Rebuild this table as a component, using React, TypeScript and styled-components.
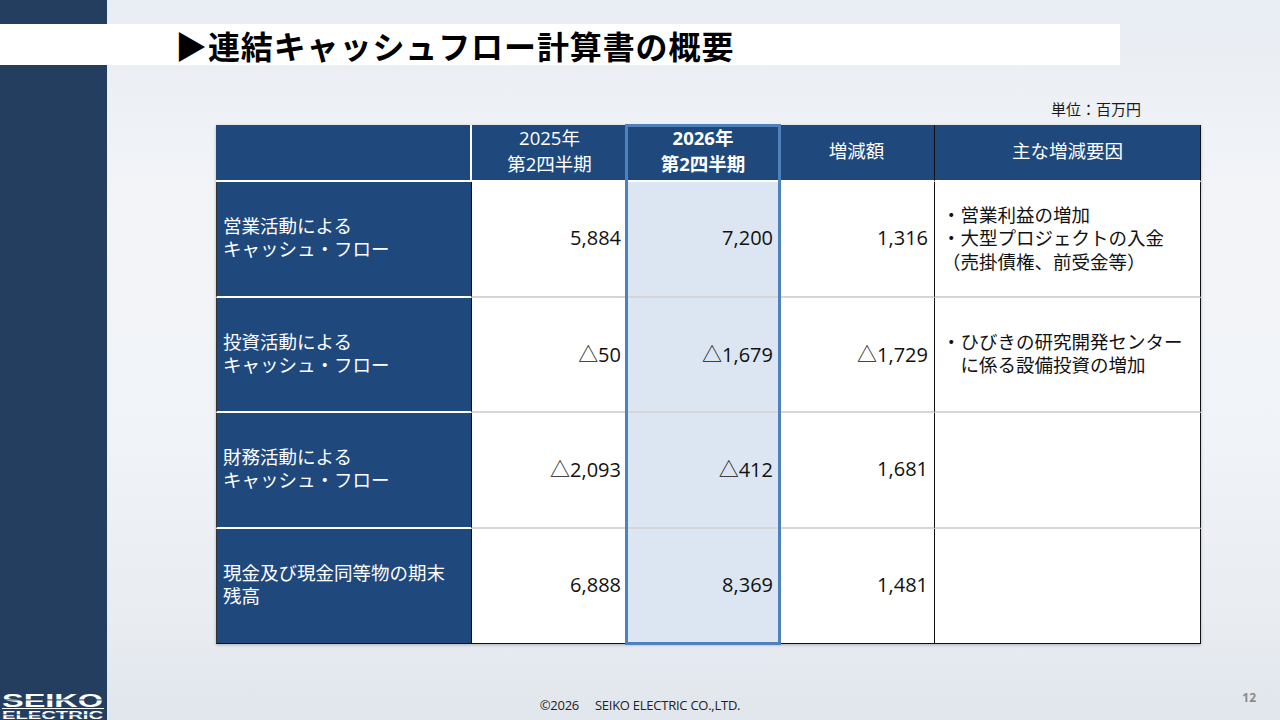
import styled, { createGlobalStyle } from "styled-components";

const GlobalStyle = createGlobalStyle`
  html, body {
    margin: 0;
    padding: 0;
    background: #eef1f5;
  }
  * {
    box-sizing: border-box;
  }
`;

const NAVY = "#1f497d";
const SIDE = "#243e5f";
const HILITE = "#4f81bd";

const Page = styled.div`
  width: 1280px;
  height: 720px;
  overflow: hidden;
  display: flex;
  flex-direction: column;
  font-family: "Open Sans", "Noto Sans CJK JP", sans-serif;
  background:
    linear-gradient(90deg, ${SIDE} 0, ${SIDE} 107px, transparent 107px),
    linear-gradient(180deg, #e8edf3 0%, #f2f4f8 28%, #f0f3f7 60%, #e9edf2 85%, #e1e6ec 100%);
`;

const TitleBand = styled.div`
  margin-top: 24px;
  height: 41px;
  width: 1120px;
  background: #ffffff;
  display: flex;
  align-items: center;
  padding-left: 175px;
`;

const Title = styled.h1`
  margin: 0;
  font-family: "Noto Sans CJK JP", sans-serif;
  font-size: 32px;
  font-weight: 700;
  line-height: 1;
  color: #000;
  letter-spacing: 0.9px;
`;

const Content = styled.div`
  padding-left: 216px;
  display: flex;
  flex-direction: column;
`;

const Unit = styled.div`
  margin-top: 35px;
  width: 985px;
  padding-right: 60px;
  text-align: right;
  font-family: "Noto Sans CJK JP", sans-serif;
  font-size: 15px;
  line-height: 18px;
  color: #1a1a1a;
`;

const Table = styled.div`
  margin-top: 7px;
  display: grid;
  grid-template-columns: 256px 155px 152px 156px 266px;
  grid-template-rows: 57px repeat(4, 115.5px);
  width: 985px;
  box-shadow: 0 1px 3px rgba(0, 0, 0, 0.25);
`;

const HeadCell = styled.div<{ $bold?: boolean; $edge?: "white" | "black" | "none"; $col: number }>`
  grid-row: 1;
  grid-column: ${(p) => p.$col};
  background: ${NAVY};
  color: #fff;
  display: flex;
  flex-direction: column;
  align-items: center;
  justify-content: center;
  text-align: center;
  font-size: 18.5px;
  line-height: 26px;
  font-weight: ${(p) => (p.$bold ? 700 : 400)};
  border-bottom: 2px solid #fff;
  border-right: ${(p) =>
    p.$edge === "white" ? "2px solid #fff" : p.$edge === "black" ? "1.5px solid #111" : "none"};
  padding-bottom: 4px;
`;

const LabelCell = styled.div<{ $row: number; $last?: boolean }>`
  grid-row: ${(p) => p.$row};
  grid-column: 1;
  background: ${NAVY};
  color: #fff;
  display: flex;
  flex-direction: column;
  justify-content: center;
  padding: 0 6px 3px;
  font-family: "Noto Sans CJK JP", sans-serif;
  font-size: 18.5px;
  line-height: 23px;
  border-left: 1px solid #333;
  border-right: 1.5px solid #111;
  border-bottom: ${(p) => (p.$last ? "1.5px solid #111" : "2px solid #fff")};
`;

const ValueCell = styled.div<{ $row: number; $col: number; $hilite?: boolean; $last?: boolean; $edge?: boolean }>`
  grid-row: ${(p) => p.$row};
  grid-column: ${(p) => p.$col};
  background: ${(p) => (p.$hilite ? "#dce6f2" : "#ffffff")};
  color: #111;
  display: flex;
  align-items: center;
  justify-content: flex-end;
  padding: 0 6px 2px;
  font-size: 20px;
  border-bottom: ${(p) => (p.$last ? "1.5px solid #111" : "2px solid #d6d6d6")};
  border-right: ${(p) => (p.$edge ? "1.5px solid #111" : "none")};
`;

const NoteCell = styled.div<{ $row: number; $last?: boolean }>`
  grid-row: ${(p) => p.$row};
  grid-column: 5;
  background: #fff;
  color: #111;
  display: flex;
  flex-direction: column;
  justify-content: center;
  padding: 0 6px 2px 7px;
  font-family: "Noto Sans CJK JP", sans-serif;
  font-size: 18.5px;
  line-height: 23.5px;
  border-right: 1.5px solid #111;
  border-bottom: ${(p) => (p.$last ? "1.5px solid #111" : "2px solid #d6d6d6")};
`;

const Line = styled.span`
  display: block;
  white-space: nowrap;
`;

const ColumnFrame = styled.div`
  grid-column: 3;
  grid-row: 1 / -1;
  margin: -1px -2px -1px -2px;
  border: 3px solid ${HILITE};
  z-index: 1;
  pointer-events: none;
`;

const BottomBar = styled.div`
  margin-top: auto;
  height: 34px;
  display: grid;
  grid-template-columns: 107px 1fr 107px;
`;

const LogoBox = styled.div`
  display: flex;
  align-items: flex-end;
  padding-left: 1px;
`;

const Copyright = styled.div`
  justify-self: center;
  align-self: end;
  padding-bottom: 6px;
  font-family: "Open Sans", sans-serif;
  font-size: 13px;
  line-height: 17px;
  letter-spacing: -0.25px;
  color: #222;
  white-space: pre;
`;

const PageNo = styled.div`
  justify-self: end;
  align-self: start;
  padding-top: 3px;
  padding-right: 24px;
  font-family: "Open Sans", sans-serif;
  font-size: 12px;
  font-weight: 700;
  color: #8a8a8a;
`;

function Logo() {
  return (
    <svg width="104" height="28" viewBox="0 0 104 28">
      <text
        x="1"
        y="14.5"
        fill="#fff"
        fontFamily="Liberation Sans, Arial, sans-serif"
        fontWeight="900"
        fontSize="19"
        textLength="101"
        lengthAdjust="spacingAndGlyphs"
      >
        SEIKO
      </text>
      <rect x="0" y="7.4" width="104" height="1" fill={SIDE} />
      <rect x="1" y="16" width="102" height="1" fill="#fff" />
      <text
        x="1"
        y="26.5"
        fill="#fff"
        fontFamily="Liberation Sans, Arial, sans-serif"
        fontWeight="900"
        fontSize="11.5"
        textLength="101"
        lengthAdjust="spacingAndGlyphs"
      >
        ELECTRIC
      </text>
      <rect x="0" y="22.4" width="104" height="0.8" fill={SIDE} />
    </svg>
  );
}

type Row = {
  label: string[];
  prev: string;
  curr: string;
  diff: string;
  notes: string[];
};

const rows: Row[] = [
  {
    label: ["営業活動による", "キャッシュ・フロー"],
    prev: "5,884",
    curr: "7,200",
    diff: "1,316",
    notes: ["・営業利益の増加", "・大型プロジェクトの入金", "（売掛債権、前受金等）"],
  },
  {
    label: ["投資活動による", "キャッシュ・フロー"],
    prev: "△50",
    curr: "△1,679",
    diff: "△1,729",
    notes: ["・ひびきの研究開発センター", "　に係る設備投資の増加"],
  },
  {
    label: ["財務活動による", "キャッシュ・フロー"],
    prev: "△2,093",
    curr: "△412",
    diff: "1,681",
    notes: [],
  },
  {
    label: ["現金及び現金同等物の期末", "残高"],
    prev: "6,888",
    curr: "8,369",
    diff: "1,481",
    notes: [],
  },
];

export default function App() {
  return (
    <>
      <GlobalStyle />
      <Page>
        <TitleBand>
          <Title>▶連結キャッシュフロー計算書の概要</Title>
        </TitleBand>
        <Content>
          <Unit>単位：百万円</Unit>
          <Table>
            <HeadCell $col={1} $edge="white" />
            <HeadCell $col={2} $edge="none">
              <Line>2025年</Line>
              <Line>第2四半期</Line>
            </HeadCell>
            <HeadCell $col={3} $edge="none" $bold>
              <Line>2026年</Line>
              <Line>第2四半期</Line>
            </HeadCell>
            <HeadCell $col={4} $edge="black">
              増減額
            </HeadCell>
            <HeadCell $col={5} $edge="black">
              主な増減要因
            </HeadCell>
            {rows.map((r, i) => {
              const row = i + 2;
              const last = i === rows.length - 1;
              return [
                <LabelCell key={`l${i}`} $row={row} $last={last}>
                  {r.label.map((t) => (
                    <Line key={t}>{t}</Line>
                  ))}
                </LabelCell>,
                <ValueCell key={`p${i}`} $row={row} $col={2} $last={last}>
                  {r.prev}
                </ValueCell>,
                <ValueCell key={`c${i}`} $row={row} $col={3} $last={last} $hilite>
                  {r.curr}
                </ValueCell>,
                <ValueCell key={`d${i}`} $row={row} $col={4} $last={last} $edge>
                  {r.diff}
                </ValueCell>,
                <NoteCell key={`n${i}`} $row={row} $last={last}>
                  {r.notes.map((t) => (
                    <Line key={t}>{t}</Line>
                  ))}
                </NoteCell>,
              ];
            })}
            <ColumnFrame />
          </Table>
        </Content>
        <BottomBar>
          <LogoBox>
            <Logo />
          </LogoBox>
          <Copyright>{"©2026　 SEIKO ELECTRIC CO.,LTD."}</Copyright>
          <PageNo>12</PageNo>
        </BottomBar>
      </Page>
    </>
  );
}
